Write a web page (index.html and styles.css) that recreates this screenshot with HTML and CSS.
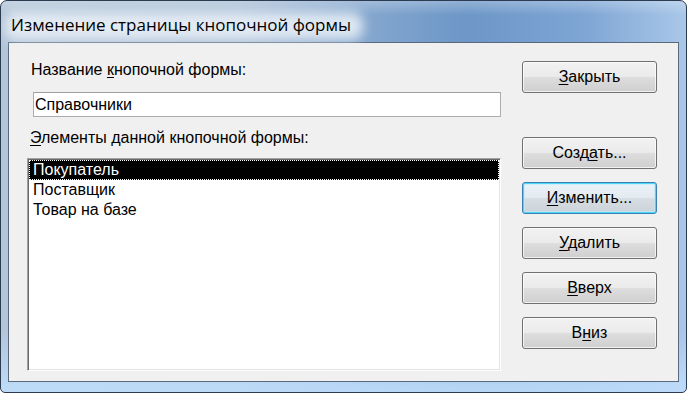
FILE: index.html
```html
<!DOCTYPE html>
<html lang="ru">
<head>
<meta charset="utf-8">
<title>Изменение страницы кнопочной формы</title>
<link rel="stylesheet" href="styles.css">
</head>
<body>
<div class="window">
  <div class="titlebar"><span class="title">Изменение страницы кнопочной формы</span></div>
  <div class="client">
    <div class="left">
      <div class="label lbl1">Название <u>к</u>нопочной формы:</div>
      <div class="textbox">Справочники</div>
      <div class="label lbl2"><u>Э</u>лементы данной кнопочной формы:</div>
      <div class="listbox">
        <div class="item selected">Покупатель</div>
        <div class="item">Поставщик</div>
        <div class="item">Товар на базе</div>
      </div>
    </div>
    <div class="right">
      <div class="btn btn-close"><span><u>З</u>акрыть</span></div>
      <div class="btn btn-first"><span>Созд<u>а</u>ть...</span></div>
      <div class="btn btn-default"><span><u>И</u>зменить...</span></div>
      <div class="btn"><span><u>У</u>далить</span></div>
      <div class="btn"><span><u>В</u>верх</span></div>
      <div class="btn"><span>В<u>н</u>из</span></div>
    </div>
  </div>
</div>
</body>
</html>
```
FILE: styles.css
```css
html, body {
  margin: 0;
  padding: 0;
  background: #ffffff;
}
body {
  width: 687px;
  height: 393px;
  overflow: hidden;
  font-family: "Liberation Sans", Arial, sans-serif;
  font-size: 16px;
  color: #000;
}
.window {
  box-sizing: border-box;
  width: 687px;
  height: 393px;
  border: 1px solid #2b3c50;
  border-radius: 7px 7px 5px 5px;
  display: flex;
  flex-direction: column;
  padding: 0 7px 10px 7px;
  background:
    linear-gradient(to bottom, rgba(255,255,255,0.25) 0px, rgba(255,255,255,0) 14px, rgba(255,255,255,0) 330px, rgba(190,220,250,0.9) 385px),
    linear-gradient(to right, #b3c5d9 0%, #aabfd7 35%, #86a8cf 52%, #6d97c7 68%, #7ea5d4 85%, #a9c7e8 100%);
  overflow: hidden;
}
.titlebar {
  height: 41px;
  flex: none;
  display: flex;
  align-items: flex-start;
}
.title {
  position: relative;
  margin: 13px 0 0 3px;
  font-family: "Open Sans", "Noto Sans", sans-serif;
  font-size: 17px;
  line-height: 22px;
  color: #000;
  white-space: nowrap;
  z-index: 0;
}
.title::before {
  content: "";
  position: absolute;
  left: -6px;
  right: -12px;
  top: -2px;
  bottom: -4px;
  background: rgba(236,242,248,0.85);
  filter: blur(6px);
  border-radius: 10px;
  z-index: -1;
}
.client {
  flex: 1;
  display: flex;
  border: 1px solid #5a6a7c;
  background: #f0f0f0;
  padding: 17px 0 0 18px;
}
.left {
  width: 474px;
  display: flex;
  flex-direction: column;
}
.label {
  line-height: 20px;
  margin-left: 4px;
  white-space: nowrap;
}
.lbl2 {
  margin-left: 3px;
  margin-top: 11px;
}
.textbox {
  box-sizing: border-box;
  margin: 12px 0 0 6px;
  width: 468px;
  height: 25px;
  border: 1px solid #acacac;
  border-top-color: #a0a0a0;
  background: #fff;
  padding: 0 0 0 1px;
  line-height: 23px;
}
.listbox {
  box-sizing: border-box;
  margin-top: 10px;
  width: 474px;
  height: 213px;
  background: #fff;
  border-top: 1px solid #a0a0a0;
  border-left: 1px solid #a0a0a0;
  border-right: 1px solid #ffffff;
  border-bottom: 1px solid #ffffff;
  box-shadow: inset 1px 1px 0 #696969, inset -1px -1px 0 #e3e3e3;
  padding: 1px;
}
.item {
  box-sizing: border-box;
  height: 20px;
  line-height: 20px;
  padding-left: 3px;
  border: 1px solid transparent;
  line-height: 18px;
}
.item.selected {
  background: #000;
  color: #fff;
  border: 1px dotted #ffffff;
}
.right {
  margin-left: 21px;
  display: flex;
  flex-direction: column;
  gap: 13px;
}
.btn {
  box-sizing: border-box;
  width: 135px;
  height: 32px;
  border: 1px solid #707070;
  border-radius: 3px;
  background: linear-gradient(to bottom, #f2f2f2 0%, #ebebeb 48%, #dddddd 52%, #cfcfcf 100%);
  box-shadow: inset 0 0 0 1px rgba(255,255,255,0.7);
  display: flex;
  align-items: center;
  justify-content: center;
  line-height: 30px;
}
.btn span {
  position: relative;
  top: 0;
}
.btn-close {
  margin-top: 1px;
}
.btn-first {
  margin-top: 31px;
}
.btn-default {
  border-color: #3c7fb1;
  box-shadow: inset 0 0 0 1px #48d6fb, inset 0 0 0 2px rgba(190,235,250,0.6);
  background: linear-gradient(to bottom, #eaf3f8 0%, #e3ebf0 48%, #d6dee3 52%, #cbd3d8 100%);
}
u {
  text-decoration: underline;
  text-underline-offset: 2px;
}
```
